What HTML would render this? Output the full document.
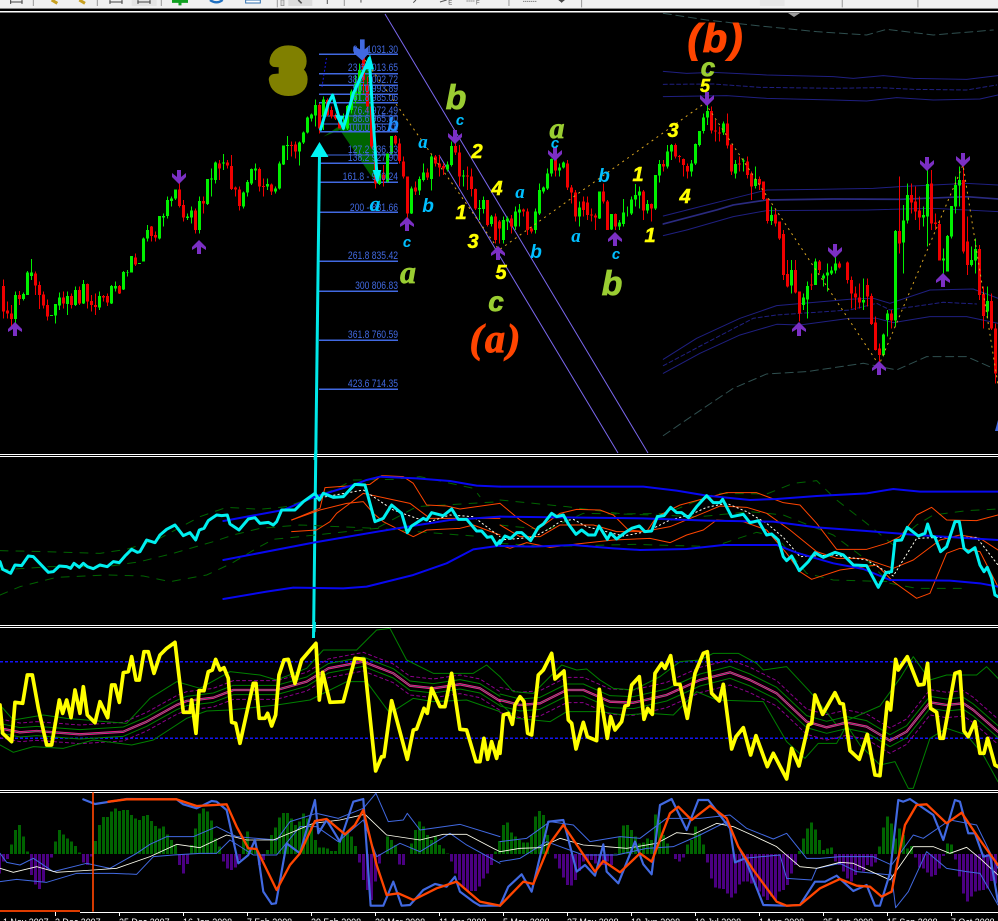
<!DOCTYPE html>
<html><head><meta charset="utf-8"><title>Chart</title>
<style>
html,body{margin:0;padding:0;background:#000;width:998px;height:921px;overflow:hidden}
svg{display:block}
polyline{fill:none;stroke-linejoin:round;stroke-linecap:round}
.lbl{font-family:"Liberation Sans",sans-serif;font-weight:bold;font-style:italic}
.ser{font-family:"Liberation Serif",serif;font-weight:bold;font-style:italic}
.fib text{font:11px "Liberation Sans",sans-serif;fill:#4169e1;text-anchor:end}
.dt{font:10.5px "Liberation Sans",sans-serif;fill:#fff}
</style></head><body>
<svg xmlns="http://www.w3.org/2000/svg" width="998" height="921" viewBox="0 0 998 921">
<defs>
<path id="ad" d="M-2 0H2V7L7 3V7L0 14L-7 7V3L-2 7Z" fill="#7b2fc4"/>
<path id="au" d="M-2 14H2V7L7 10V7L0 0L-7 7V10L-2 7Z" fill="#7b2fc4"/>
</defs>
<rect width="998" height="921" fill="#000"/>

<!-- toolbar -->
<rect width="998" height="8" fill="#f0f0f0"/>
<rect y="8" width="998" height="1" fill="#8a8a8a"/>
<rect y="11" width="998" height="1.5" fill="#fff"/>
<g transform="scale(.3333)">
<path d="M100 0V18M292 0V18M484 0V18M832 0V22M1033 0V18M1527 0V18M1745 0V22" stroke="#999" stroke-width="3"/>
<path d="M30 6H68M32 0V12M66 0V12M328 6H368M330 0V12M366 0V12" stroke="#444" stroke-width="3" fill="none"/>
<rect x="395" y="0" width="75" height="18" fill="#e4e4e4"/>
<path d="M412 6H452M414 0V12M450 0V12" stroke="#444" stroke-width="3" fill="none"/>
<path d="M155 0L172 10M238 0L255 10" stroke="#c8a020" stroke-width="9"/>
<path d="M516 4H564M540 0V16" stroke="#10a020" stroke-width="9"/>
<path d="M630 0Q650 14 668 0" stroke="#2070c0" stroke-width="7" fill="none"/>
<rect x="737" y="0" width="44" height="9" fill="#fff" stroke="#3070b0" stroke-width="3"/>
<rect x="843" y="0" width="9" height="17" fill="#ddd" stroke="#888" stroke-width="2"/>
<rect x="865" y="0" width="72" height="18" fill="#dcdcdc"/>
<path d="M895 0L905 10" stroke="#555" stroke-width="5"/>
<path d="M982 0V12M1083 0V8M1240 8L1248 0M1320 6L1340 0" stroke="#555" stroke-width="3"/>
<text x="1345" y="14" font-family="Liberation Sans,sans-serif" font-size="18" fill="#555">E</text>
<text x="1428" y="14" font-family="Liberation Sans,sans-serif" font-size="18" fill="#555">F</text>
<path d="M1400 3H1425M1570 4H1610M1685 0V8" stroke="#555" stroke-width="3" stroke-dasharray="3 3"/>
<path d="M1675 0H1695L1685 8Z" fill="#444"/>
<rect x="2280" y="0" width="74" height="18" fill="#e6e6e6"/>
<path d="M2527 0V22M2754 0V22" stroke="#999" stroke-width="3"/>
</g>
<path d="M788 13H800L794 17Z" fill="#999"/>

<!-- diagonal lines -->
<path d="M385 14L648 453M439 155L618 453" stroke="#7b68ee" stroke-width="1" fill="none"/>

<!-- channels right -->
<g transform="translate(500,0) scale(.3333)" stroke-width="3">
<polyline stroke="#1f1f80" points="490,214 560,220 640,217 800,225 1000,230 1060,235 1150,227 1240,235 1400,238 1494,227"/>
<polyline stroke="#1f1f80" stroke-dasharray="12 8" points="490,253 640,252 780,262 1000,265 1140,263 1240,268 1400,270 1490,255"/>
<polyline stroke="#1f1f80" points="490,290 680,287 800,295 1000,300 1100,303 1190,293 1300,300 1440,297 1494,285"/>
<polyline stroke="#2f4f4f" stroke-dasharray="24 14" points="490,40 620,60 780,78 950,95 1100,105 1160,88 1300,105 1480,90"/>
<polyline stroke="#1f1f80" points="490,648 620,615 700,595 800,570 950,568 1120,565 1200,560 1400,550 1494,555"/>
<polyline stroke="#2a2a80" stroke-width="5" points="490,672 650,630 700,615 800,600 1000,597 1200,598 1400,590 1494,597"/>
<polyline stroke="#1f1f80" points="560,690 700,650 800,632 1100,630 1300,625 1494,635"/>
<g transform="translate(0,690)">
<polyline stroke="#1f1f80" points="490,17 560,0"/>
<polyline stroke="#1f1f80" points="490,388 590,325 720,265 830,227 1050,208 1120,205 1170,220 1290,180 1420,177 1494,205"/>
<polyline stroke="#1f1f80" stroke-dasharray="12 8" points="490,407 620,338 760,265 830,255 1050,240 1130,220 1170,240 1330,217 1430,222"/>
<polyline stroke="#1f1f80" points="490,430 600,370 720,315 830,283 900,285 1050,265 1130,265 1180,278 1290,260 1400,260 1494,280"/>
<polyline stroke="#2f4f4f" stroke-dasharray="24 14" points="490,617 610,535 700,475 800,432 920,425 1090,400 1190,420 1280,380 1400,380 1480,415"/>
</g>
</g>

<!-- green harmonic polygon -->
<g transform="translate(260,30) scale(.3333)">
<polygon fill="#006400" points="190,320 250,280 300,120 330,100 340,300 358,462 335,440 240,300"/>
</g>

<!-- fib lines -->
<g transform="scale(.3333)" stroke="#4169e1" stroke-width="3.6" shape-rendering="crispEdges">
<path d="M957 163H1194M957 221H1194M957 256H1194M957 283H1194M957 308H1194M957 348H1194M957 372H1194M957 395H1194M957 465H1194M957 490H1194M957 547H1194M957 637H1194M957 784H1194M957 874H1194M957 1021H1194M957 1168H1194"/>
</g>
<path d="M326.5 58L322 87" stroke="#1414e0" stroke-width="1" stroke-dasharray="2 2"/>

<!-- candles -->
<g transform="scale(.3333)" shape-rendering="crispEdges" fill="none">
<path stroke="#00f000" stroke-width="3.6" d="M46.5 875V990M70.5 878V902M82.5 813V885M94.5 777V840M154.5 945V948M166.5 912V970M178.5 878V930M202.5 875V945M226.5 860V918M250.5 840V912M298.5 875V930M334.5 855V912M346.5 845V875M370.5 813V870M382.5 810V830M394.5 768V818M418.5 790V792M430.5 713V785M442.5 675V725M478.5 648V718M490.5 640V680M502.5 590V655M514.5 590V620M526.5 568V600M562.5 640V660M574.5 620V670M598.5 590V700M622.5 537V615M634.5 505V590M646.5 485V550M670.5 462V510M730.5 575V625M742.5 540V590M754.5 505V555M766.5 490V540M802.5 535V570M826.5 560V580M838.5 485V568M850.5 437V495M862.5 408V480M898.5 425V497M910.5 395V432M922.5 350V400M934.5 340V365M946.5 298V380M970.5 290V390M1030.5 340V392M1042.5 315V390M1054.5 268V340M1066.5 225V310M1078.5 190V300M1138.5 510V555M1162.5 460V548M1174.5 408V465M1234.5 560V642M1258.5 530V585M1270.5 490V545M1294.5 465V572M1342.5 485V515M1354.5 425V500M1390.5 510V560M1438.5 600V660M1450.5 590V640M1474.5 645V680M1510.5 650V730M1522.5 650V690M1546.5 620V690M1558.5 612V680M1606.5 625V700M1618.5 550V645M1630.5 560V580M1642.5 505V570M1654.5 475V530M1678.5 490V530M1690.5 485V505M1738.5 605V680M1798.5 575V657M1834.5 642V690M1858.5 660V690M1870.5 597V680M1882.5 620V650M1894.5 590V645M1906.5 552V620M1918.5 560V625M1942.5 600V640M1966.5 525V630M1978.5 480V548M2002.5 435V505M2014.5 432V480M2074.5 480V530M2086.5 430V495M2098.5 393V440M2110.5 340V400M2122.5 300V375M2170.5 365V405M2206.5 480V535M2230.5 475V515M2266.5 500V565M2314.5 620V675M2374.5 780V880M2410.5 880V930M2422.5 845V955M2446.5 775V855M2470.5 820V860M2482.5 790V875M2494.5 800V825M2506.5 770V820M2530.5 802V803M2590.5 835V930M2650.5 1000V1070M2662.5 930V1010M2686.5 690V980M2710.5 615V820M2722.5 550V670M2770.5 620V680M2782.5 490V740M2830.5 745V820M2842.5 705V815M2854.5 618V715M2866.5 530V640M2878.5 500V620M2914.5 740V800M2926.5 715V820M2962.5 860V955"/>
<path stroke="#00f000" stroke-width="9.6" d="M46.5 885V957M70.5 882V897M82.5 818V885M94.5 818V828M154.5 945V948M166.5 912V947M178.5 892V917M202.5 888V912M226.5 870V915M250.5 852V910M298.5 888V922M334.5 858V910M346.5 858V865M370.5 816V868M382.5 816V818M394.5 768V818M418.5 789V792M430.5 715V785M442.5 690V715M478.5 648V715M490.5 648V652M502.5 600V648M514.5 595V603M526.5 568V595M562.5 650V654M574.5 632V652M598.5 603V690M622.5 537V612M634.5 535V538M646.5 488V540M670.5 487V490M730.5 578V620M742.5 546V578M754.5 507V550M766.5 505V512M802.5 552V560M826.5 565V575M838.5 490V565M850.5 437V493M862.5 435V438M898.5 428V455M910.5 397V428M922.5 352V397M934.5 343V355M946.5 315V347M970.5 298V350M1030.5 372V388M1042.5 318V385M1054.5 275V330M1066.5 250V300M1078.5 210V285M1138.5 520V552M1162.5 460V545M1174.5 408V460M1234.5 565V640M1258.5 537V572M1270.5 517V540M1294.5 470V537M1342.5 493V508M1354.5 438V495M1390.5 527V530M1438.5 624V627M1450.5 600V627M1474.5 650V672M1510.5 660V720M1522.5 655V665M1546.5 635V680M1558.5 628V638M1606.5 635V690M1618.5 570V640M1630.5 562V575M1642.5 520V565M1654.5 477V520M1678.5 502V512M1690.5 487V502M1738.5 622V650M1798.5 575V655M1834.5 642V688M1858.5 668V680M1870.5 637V672M1882.5 637V638M1894.5 598V640M1906.5 585V598M1918.5 574V587M1942.5 612V632M1966.5 525V625M1978.5 492V527M2002.5 454V500M2014.5 435V455M2074.5 490V515M2086.5 432V490M2098.5 393V435M2110.5 352V393M2122.5 333V352M2170.5 370V398M2206.5 492V520M2230.5 482V485M2266.5 537V558M2314.5 645V663M2374.5 810V857M2410.5 892V915M2422.5 858V898M2446.5 785V855M2470.5 827V835M2482.5 817V827M2494.5 812V820M2506.5 790V812M2530.5 802V803M2590.5 900V908M2650.5 1003V1065M2662.5 940V960M2686.5 693V962M2710.5 662V728M2722.5 585V662M2770.5 645V652M2782.5 552V650M2830.5 775V782M2842.5 708V815M2854.5 618V710M2866.5 555V620M2878.5 540V557M2914.5 780V795M2926.5 747V782M2962.5 903V935"/>
<path stroke="#f00000" stroke-width="3.6" d="M10.5 838V955M22.5 905V955M34.5 915V980M58.5 873V915M106.5 815V885M118.5 845V927M130.5 875V925M142.5 898V962M190.5 875V925M214.5 880V925M238.5 860V915M262.5 850V925M274.5 885V935M286.5 880V945M310.5 885V905M322.5 880V918M358.5 855V882M406.5 760V798M454.5 678V725M466.5 695V725M538.5 510V622M550.5 600V665M586.5 625V700M610.5 590V640M658.5 480V540M682.5 480V505M694.5 465V570M706.5 560V590M718.5 560V632M778.5 503V575M790.5 535V590M814.5 550V585M874.5 425V470M886.5 425V475M958.5 310V400M982.5 295V350M994.5 320V355M1006.5 340V360M1018.5 350V385M1090.5 150V280M1102.5 230V338M1114.5 235V445M1126.5 440V565M1150.5 495V560M1186.5 405V435M1198.5 415V490M1210.5 470V535M1222.5 530V665M1246.5 545V585M1282.5 505V540M1306.5 465V500M1318.5 465V530M1330.5 490V525M1366.5 425V465M1378.5 435V560M1402.5 500V570M1414.5 505V590M1426.5 565V630M1462.5 600V680M1486.5 640V730M1498.5 660V730M1534.5 645V700M1570.5 625V650M1582.5 625V705M1594.5 680V700M1666.5 470V530M1702.5 480V570M1714.5 555V610M1726.5 570V665M1750.5 590V650M1762.5 590V660M1774.5 625V665M1786.5 640V690M1810.5 550V610M1822.5 600V690M1846.5 640V690M1930.5 570V660M1954.5 610V665M1990.5 480V515M2026.5 430V475M2038.5 465V488M2050.5 475V530M2062.5 490V535M2134.5 320V400M2146.5 360V425M2158.5 380V425M2182.5 340V445M2194.5 433V525M2218.5 470V515M2242.5 470V535M2254.5 515V600M2278.5 530V570M2290.5 545V600M2302.5 595V670M2326.5 630V680M2338.5 665V720M2350.5 690V840M2362.5 780V862M2386.5 780V880M2398.5 875V965M2434.5 820V870M2458.5 780V820M2518.5 785V806M2542.5 785V850M2554.5 830V925M2566.5 860V930M2578.5 850V925M2602.5 835V920M2614.5 880V975M2626.5 950V1052M2638.5 1030V1100M2674.5 930V985M2698.5 530V760M2734.5 550V640M2746.5 560V660M2758.5 590V690M2794.5 510V690M2806.5 640V690M2818.5 660V780M2890.5 500V760M2902.5 650V825M2938.5 735V900M2950.5 860V985M2974.5 880V990M2986.5 970V1150"/>
<path stroke="#f00000" stroke-width="9.6" d="M10.5 858V935M22.5 932V940M34.5 940V957M58.5 885V897M106.5 820V857M118.5 855V885M130.5 883V917M142.5 915V950M190.5 892V910M214.5 888V915M238.5 870V910M262.5 852V905M274.5 903V915M286.5 915V921M310.5 888V893M322.5 888V908M358.5 858V880M406.5 772V794M454.5 680V708M466.5 705V712M538.5 568V618M550.5 615V652M586.5 632V690M610.5 603V610M658.5 490V505M682.5 487V497M694.5 498V567M706.5 562V568M718.5 568V618M778.5 507V560M790.5 558V561M814.5 553V575M874.5 435V438M886.5 433V455M958.5 315V385M982.5 300V345M994.5 330V350M1006.5 345V355M1018.5 355V385M1090.5 165V240M1102.5 255V320M1114.5 320V440M1126.5 440V550M1150.5 525V540M1186.5 408V430M1198.5 430V483M1210.5 485V530M1222.5 530V640M1246.5 563V575M1282.5 517V532M1306.5 470V490M1318.5 490V503M1330.5 498V505M1366.5 438V458M1378.5 457V530M1402.5 527V530M1414.5 530V567M1426.5 567V625M1462.5 600V675M1486.5 650V720M1498.5 665V685M1534.5 655V680M1570.5 628V635M1582.5 635V690M1594.5 685V695M1666.5 478V512M1702.5 490V563M1714.5 563V578M1726.5 577V650M1750.5 605V630M1762.5 607V645M1774.5 644V647M1786.5 647V652M1810.5 575V605M1822.5 605V690M1846.5 642V680M1930.5 574V632M1954.5 612V625M1990.5 492V500M2026.5 435V470M2038.5 468V471M2050.5 477V495M2062.5 498V515M2134.5 333V392M2146.5 392V395M2158.5 397V400M2182.5 370V437M2194.5 433V515M2218.5 491V494M2242.5 485V525M2254.5 520V560M2278.5 537V553M2290.5 545V597M2302.5 595V663M2326.5 643V670M2338.5 665V715M2350.5 702V825M2362.5 822V860M2386.5 810V877M2398.5 875V940M2434.5 853V856M2458.5 785V810M2518.5 790V802M2542.5 787V840M2554.5 840V880M2566.5 880V893M2578.5 893V908M2602.5 855V890M2614.5 888V972M2626.5 967V1050M2638.5 1045V1065M2674.5 940V962M2698.5 693V730M2734.5 585V608M2746.5 605V635M2758.5 632V652M2794.5 550V670M2806.5 668V672M2818.5 672V782M2890.5 540V755M2902.5 725V795M2938.5 747V885M2950.5 882V948M2974.5 903V985M2986.5 985V1120"/>
</g>

<!-- zigzag dashed -->
<path d="M365 60L499 250L705 103L879 365L963 165L998 385" fill="none" stroke="#daa520" stroke-width="1" stroke-dasharray="2 4"/>

<!-- fib labels -->
<g class="fib" transform="translate(398,0) scale(.78,1)">
<text y="53">0.0 1031.30</text><text y="71">23.6 1013.65</text><text y="83">38.2 1002.72</text><text y="92">50.0 993.89</text><text y="101">61.8 985.06</text><text y="114">76.4 972.49</text><text y="122">88.6 965.00</text><text y="131">100.0 956.48</text><text y="153">127.2 936.13</text><text y="161">138.2 927.90</text><text y="180">161.8 - 910.24</text><text y="211">200 - 881.66</text><text y="259">261.8 835.42</text><text y="289">300 806.83</text><text y="338">361.8 760.59</text><text y="387">423.6 714.35</text>
</g>

<!-- cyan wave -->
<g transform="translate(260,30) scale(.3333)" fill="none" stroke="#00f5f5">
<polyline stroke-width="9" points="182,298 205,220 218,195 235,255 250,295 280,190 328,85 340,280 352,450"/>
<path stroke="none" fill="#00f5f5" d="M330 72L316 118H342ZM352 462L338 420H364Z"/>
<path stroke="none" fill="#00f5f5" d="M225 255L240 285 252 258Z"/>
<path stroke="none" fill="#4169e1" d="M300 28H314V58L326 48V70L307 92 282 70V48L300 58Z"/>
</g>
<path d="M319.5 155L313.5 638" stroke="#00e8e8" stroke-width="3" fill="none"/>
<path d="M319.5 142L310.5 157H328.5Z" fill="#00f5f5"/>

<!-- purple arrows -->
<use href="#ad" x="179" y="170"/><use href="#ad" x="455" y="130"/><use href="#ad" x="555" y="147"/><use href="#ad" x="707" y="92"/><use href="#ad" x="927" y="157"/><use href="#ad" x="963" y="153"/><use href="#ad" x="835" y="244"/>
<use href="#au" x="407" y="217"/><use href="#au" x="199" y="240"/><use href="#au" x="15" y="322"/><use href="#au" x="498" y="246"/><use href="#au" x="615" y="232"/><use href="#au" x="799" y="322"/><use href="#au" x="879" y="361"/><use href="#au" x="943" y="273"/>
<path d="M995 431L998 420V431Z" fill="#4169e1"/>

<!-- labels -->
<text x="273" y="90" font-family="Liberation Sans,sans-serif" font-weight="bold" font-size="56" fill="#808000" stroke="#808000" stroke-width="11" stroke-linejoin="round">3</text>
<g fill="#9acd32" stroke="#9acd32" stroke-width=".7" text-anchor="middle">
<text class="ser" x="408" y="283" font-size="32">a</text>
<text class="lbl" x="456" y="109" font-size="34">b</text>
<text class="lbl" x="496" y="311" font-size="28">c</text>
<text class="ser" x="557" y="138" font-size="30">a</text>
<text class="lbl" x="708" y="76" font-size="26">c</text>
<text class="lbl" x="612" y="295" font-size="34">b</text>
</g>
<g fill="#ff4500" stroke="#ff4500" stroke-width="1" text-anchor="middle" letter-spacing="2">
<text class="ser" x="496" y="352" font-size="40">(a)</text>
<text class="lbl" x="716" y="52" font-size="40">(b)</text>
</g>
<g fill="#00bfff" text-anchor="middle">
<text class="lbl" x="407" y="247" font-size="15">c</text>
<text class="lbl" x="460" y="125" font-size="15">c</text>
<text class="lbl" x="555" y="148" font-size="15">c</text>
<text class="lbl" x="616" y="259" font-size="15">c</text>
<text class="ser" x="423" y="148" font-size="19">a</text>
<text class="lbl" x="428" y="212" font-size="19">b</text>
<text class="ser" x="520" y="198" font-size="19">a</text>
<text class="lbl" x="536" y="258" font-size="19">b</text>
<text class="ser" x="576" y="242" font-size="19">a</text>
<text class="lbl" x="604" y="182" font-size="19">b</text>
<text class="ser" x="375" y="211" font-size="22">a</text>
<text class="lbl" x="393" y="131" font-size="19" fill="#2090ff">b</text>
</g>
<g fill="#ffff00" stroke="#ffff00" stroke-width=".5" text-anchor="middle" font-size="20">
<text class="lbl" x="477" y="158">2</text><text class="lbl" x="461" y="219">1</text><text class="lbl" x="473" y="248">3</text><text class="lbl" x="497" y="195">4</text><text class="lbl" x="501" y="279">5</text><text class="lbl" x="638" y="181">1</text><text class="lbl" x="650" y="242">1</text><text class="lbl" x="673" y="137">3</text><text class="lbl" x="685" y="203">4</text><text class="lbl" x="705" y="92" font-size="18">5</text>
</g>

<!-- panel separators -->
<g fill="#fff">
<rect y="454" width="998" height="1"/><rect y="456" width="998" height="1"/>
<rect y="625" width="998" height="1"/><rect y="627" width="998" height="1"/>
<rect y="790" width="998" height="1"/><rect y="792" width="998" height="1"/>
</g>
<path d="M316 450L315 460M314.5 622L314 632" stroke="#00e8e8" stroke-width="3"/>

<!-- panel 2 left -->
<g transform="translate(0,450) scale(.3333)">
<g stroke="#006400" stroke-width="3" stroke-dasharray="24 24">
<polyline points="0,302 140,305 300,310 380,298 470,270 600,200 680,172 780,178 860,170 1000,120 1060,90 1180,88 1260,80 1420,115 1440,140"/>
<polyline points="0,360 150,350 320,350 420,335 520,310 640,275 700,255 780,235 900,225 1130,235 1250,170 1500,155"/>
<polyline points="0,435 60,410 170,382 320,375 430,378 510,395 620,375 695,340 770,295 820,268 900,260 1130,235 1250,245 1420,258"/>
</g>
<g stroke="#ff4500" stroke-width="3">
<polyline points="875,210 960,175 975,113 1110,103 1145,77 1210,80 1240,100 1280,165 1340,168 1380,177 1500,160"/>
<polyline points="875,245 950,240 990,215 1010,190 1090,130 1160,145 1230,160 1290,205 1500,205"/>
<polyline points="875,210 960,180 1040,160 1090,155 1120,190 1150,215 1240,260 1280,240 1380,235 1420,225 1500,255"/>
</g>
<polyline stroke="#fffff0" stroke-width="3" stroke-dasharray="4 9" points="950,145 1090,120 1180,180 1250,205 1290,215 1350,195 1420,200 1500,260"/>
<g stroke="#0808f0" stroke-width="6">
<polyline points="670,213 850,180 945,140 1060,105 1100,90 1140,80 1250,85 1350,93 1430,107 1500,110"/>
<polyline points="670,330 940,278 1180,237 1350,210 1500,200"/>
<polyline points="670,447 800,425 880,413 1030,415 1100,410 1240,375 1340,340 1420,298 1500,287"/>
</g>
<polyline stroke="#00f0f0" stroke-width="9" points="0,335 8,358 32,370 45,345 65,347 85,318 100,320 145,367 160,365 178,348 200,350 212,355 222,340 238,352 250,340 262,350 280,356 300,345 322,350 340,335 358,338 375,318 395,298 412,307 420,305 440,270 465,278 480,255 500,238 525,225 550,257 570,248 587,270 598,240 612,235 625,212 650,195 665,197 682,195 690,222 717,240 745,207 765,203 780,220 805,217 820,225 830,215 845,180 885,180 910,155 945,130 958,150 970,130 1000,142 1030,140 1065,103 1095,105 1125,215 1150,205 1175,165 1205,190 1222,248 1235,228 1270,205 1280,210 1295,188 1330,197 1355,177 1375,208 1400,208 1430,243 1445,243 1462,262 1475,260 1490,285 1500,272"/>
</g>
<!-- panel 2 right -->
<g transform="translate(500,450) scale(.3333)">
<g stroke="#006400" stroke-width="3" stroke-dasharray="24 24">
<polyline points="0,150 200,170 370,192 500,190 560,165 650,130 800,132 880,100 950,92 1010,150 1100,220 1180,285 1250,225 1300,195 1400,182 1494,177"/>
<polyline points="0,225 140,240 250,190 400,193 600,200 750,185 850,195 1000,255 1100,330 1170,400 1250,415 1400,415"/>
<polyline points="0,280 150,290 400,283 640,290 700,270 770,247 830,260 920,370 1000,390 1070,392 1170,395"/>
</g>
<g stroke="#ff4500" stroke-width="3">
<polyline points="0,160 60,210 110,240 180,190 230,178 300,180 340,195 385,240 440,245 470,200 540,165 680,128 770,128 850,158 900,165 950,220 1010,298 1100,298 1160,280 1200,260 1250,195 1295,172 1340,210 1430,212 1494,195"/>
<polyline points="0,225 60,260 120,260 180,225 280,225 350,245 430,245 510,230 620,185 660,168 740,172 800,190 870,240 950,305 1010,325 1090,325 1180,355 1240,330 1320,270 1380,255 1440,265 1494,300"/>
<polyline points="0,285 30,295 80,278 150,292 230,282 340,270 450,265 510,278 560,255 610,240 650,210 730,215 800,240 860,310 900,365 935,388 1020,360 1130,345 1180,395 1250,445 1290,430 1340,310 1380,295 1440,305 1494,410"/>
</g>
<polyline stroke="#fffff0" stroke-width="3" stroke-dasharray="4 9" points="0,270 100,262 150,235 180,215 220,208 260,230 300,240 370,258 440,245 510,210 570,195 620,172 680,160 740,185 800,220 850,262 900,320 1000,315 1100,330 1180,378 1250,265 1330,262 1430,262 1494,345"/>
<g stroke="#0808f0" stroke-width="6">
<polyline points="0,110 430,110 530,122 620,137 750,150 830,147 950,138 1100,130 1180,117 1260,125 1494,125"/>
<polyline points="0,200 430,205 620,212 820,215 950,232 1100,243 1250,255 1494,270"/>
<polyline points="0,288 100,290 220,285 340,295 420,300 560,297 670,285 830,285 890,308 1000,340 1090,357 1170,390 1350,392 1440,400 1494,410"/>
</g>
<polyline stroke="#00f0f0" stroke-width="9" points="0,280 15,258 32,265 50,248 65,248 92,272 115,232 130,222 155,190 170,200 190,195 205,222 228,253 245,240 265,255 285,255 297,228 322,268 332,250 350,267 375,248 395,235 418,228 435,245 455,243 472,200 492,197 512,172 530,188 545,188 565,203 590,170 620,137 640,158 660,158 668,148 695,200 730,193 750,218 775,212 800,255 815,252 835,270 850,320 860,332 875,318 898,362 925,335 945,308 970,322 1005,307 1030,315 1060,345 1100,347 1135,412 1158,368 1175,365 1185,272 1205,270 1222,232 1255,258 1275,250 1283,222 1295,258 1305,262 1322,305 1340,290 1365,215 1378,215 1392,295 1405,307 1425,293 1440,345 1452,365 1462,352 1475,385 1485,435 1494,440"/>
</g>

<!-- panel 3 left -->
<g transform="translate(0,625) scale(.3333)">
<defs><polyline id="c8" points="0,310 60,322 110,318 240,328 370,320 440,290 530,240 560,228 640,218 700,195 830,195 920,170 985,130 1090,110 1180,145 1230,182 1300,190 1380,178 1440,190 1500,228"/></defs>
<path d="M0 110H1500M0 340H1500" stroke="#1414f8" stroke-width="3.6" stroke-dasharray="9 6" shape-rendering="crispEdges"/>
<g fill="none">
<use href="#c8" stroke="#8b008b" stroke-width="3" stroke-dasharray="9 9" transform="translate(0,-28)"/>
<use href="#c8" stroke="#8b008b" stroke-width="3" stroke-dasharray="9 9" transform="translate(0,28)"/>
<use href="#c8" stroke="#008000" stroke-width="3" transform="translate(0,-14)"/>
<use href="#c8" stroke="#008000" stroke-width="3" transform="translate(0,14)"/>
</g>
<polyline stroke="#008000" stroke-width="3" points="0,240 40,285 130,270 200,280 380,295 450,220 530,170 600,190 690,140 780,150 830,165 920,130 970,75 1070,75 1130,15 1170,10 1220,105 1300,145 1420,145 1460,120 1500,155"/>
<polyline stroke="#008000" stroke-width="3" points="0,360 40,382 100,365 190,370 280,345 395,360 460,345 560,280 620,258 690,255 830,240 930,225 1040,170 1100,170 1170,265 1240,220 1300,230 1400,225 1500,260"/>
<use href="#c8" fill="none" stroke="#ff1493" stroke-width="7"/>
<use href="#c8" fill="none" stroke="#008040" stroke-width="2"/>
<polyline stroke="#ffff00" stroke-width="11" points="0,240 8,325 35,350 45,232 68,235 82,150 97,150 115,250 140,360 155,360 178,225 188,265 200,225 213,278 225,195 240,265 250,185 262,270 285,293 300,230 323,278 335,180 345,180 358,232 370,143 385,140 395,95 408,165 418,165 432,80 445,80 462,145 480,90 500,70 525,52 550,262 570,262 575,225 588,325 597,197 612,197 625,140 637,135 647,103 660,135 672,128 685,160 695,292 707,295 720,355 760,175 768,175 778,280 795,280 803,265 815,303 827,270 837,150 852,105 865,103 885,175 905,105 948,55 958,225 968,142 990,232 1030,230 1065,100 1092,103 1127,438 1145,395 1152,395 1175,227 1222,403 1240,315 1250,312 1272,250 1282,265 1295,190 1320,245 1335,245 1355,145 1380,313 1400,315 1428,410 1440,410 1452,340 1463,403 1475,350 1490,400 1500,350"/>
</g>
<!-- panel 3 right -->
<g transform="translate(500,625) scale(.3333)">
<defs><polyline id="c9" points="0,225 60,240 120,235 200,195 250,195 330,230 400,233 500,210 600,165 690,142 750,165 830,205 920,290 980,307 1040,293 1100,305 1170,347 1220,320 1290,232 1340,240 1390,235 1420,255 1494,320"/></defs>
<path d="M0 110H1494M0 340H1494" stroke="#1414f8" stroke-width="3.6" stroke-dasharray="9 6" shape-rendering="crispEdges"/>
<g fill="none">
<use href="#c9" stroke="#8b008b" stroke-width="3" stroke-dasharray="9 9" transform="translate(0,-38)"/>
<use href="#c9" stroke="#8b008b" stroke-width="3" stroke-dasharray="9 9" transform="translate(0,38)"/>
<use href="#c9" stroke="#008000" stroke-width="3" transform="translate(0,-18)"/>
<use href="#c9" stroke="#008000" stroke-width="3" transform="translate(0,18)"/>
</g>
<polyline stroke="#008000" stroke-width="3" points="0,155 40,200 100,205 185,120 230,135 260,132 300,165 340,190 400,195 480,155 540,110 600,105 640,85 715,85 770,115 790,135 860,125 930,200 1010,300 1140,243 1200,160 1240,95 1290,165 1340,150 1430,150 1460,125 1494,160"/>
<polyline stroke="#008000" stroke-width="3" points="0,235 50,280 150,290 200,260 300,260 370,270 450,265 520,270 590,200 650,225 790,230 860,350 915,400 955,355 1010,355 1040,300 1080,360 1140,420 1185,410 1225,490 1240,490 1290,340 1340,310 1400,330 1450,390 1494,470"/>
<use href="#c9" fill="none" stroke="#ff1493" stroke-width="7"/>
<use href="#c9" fill="none" stroke="#008040" stroke-width="2"/>
<polyline stroke="#ffff00" stroke-width="11" points="0,385 10,270 25,265 37,298 45,240 60,215 72,230 83,325 95,330 115,150 130,135 155,85 165,162 192,138 205,285 215,295 228,372 250,292 262,335 290,347 298,193 322,340 332,275 345,315 365,290 375,243 385,240 395,180 418,155 432,283 443,250 457,268 465,145 485,115 495,130 512,92 525,178 540,178 562,280 585,145 610,85 622,80 635,205 658,228 670,178 695,372 708,335 730,308 752,390 768,332 802,425 820,385 860,462 875,370 897,423 925,300 935,295 945,210 968,268 1005,203 1020,235 1030,237 1050,377 1078,403 1102,328 1125,450 1140,452 1162,232 1172,255 1187,103 1195,135 1222,95 1255,180 1272,178 1283,115 1292,250 1310,262 1320,340 1330,340 1365,145 1380,140 1392,318 1405,335 1425,290 1440,385 1452,385 1463,340 1485,420 1494,425"/>
</g>

<!-- panel 4 left -->
<g transform="translate(0,785) scale(.3333)">
<g shape-rendering="crispEdges" stroke-width="9.6" fill="none">
<path stroke="#006400" d="M34.5 207V178M46.5 207V135M58.5 207V120M70.5 207V155M82.5 207V200M166.5 207V170M178.5 207V135M190.5 207V148M202.5 207V160M214.5 207V170M226.5 207V183M238.5 207V203M286.5 207V168M298.5 207V120M310.5 207V96M322.5 207V96M334.5 207V80M346.5 207V70M358.5 207V78M370.5 207V75M382.5 207V75M394.5 207V90M406.5 207V100M418.5 207V105M430.5 207V93M442.5 207V90M454.5 207V108M466.5 207V123M478.5 207V130M490.5 207V125M502.5 207V148M514.5 207V165M526.5 207V180M574.5 207V180M586.5 207V130M598.5 207V85M610.5 207V70M622.5 207V80M634.5 207V107M646.5 207V160M658.5 207V185M730.5 207V165M742.5 207V140M754.5 207V195M766.5 207V190M802.5 207V195M814.5 207V150M826.5 207V128M838.5 207V97M850.5 207V84M862.5 207V84M874.5 207V100M886.5 207V120M898.5 207V110M910.5 207V85M922.5 207V100M934.5 207V120M946.5 207V165M958.5 207V187M970.5 207V187M982.5 207V190M994.5 207V198M1006.5 207V198M1018.5 207V160M1030.5 207V150M1042.5 207V140M1054.5 207V155M1066.5 207V183M1162.5 207V155M1174.5 207V165M1186.5 207V180M1234.5 207V175M1246.5 207V135M1258.5 207V110M1270.5 207V125M1282.5 207V150M1294.5 207V165M1306.5 207V155M1318.5 207V180M1330.5 207V190M1342.5 207V205M1486.5 207V200M1498.5 207V168"/>
<path stroke="#4b0082" d="M-1.5 207V265M10.5 207V230M22.5 207V222M94.5 207V270M106.5 207V298M118.5 207V312M130.5 207V290M142.5 207V255M154.5 207V217M250.5 207V232M262.5 207V240M274.5 207V215M538.5 207V240M550.5 207V265M562.5 207V237M670.5 207V230M682.5 207V250M694.5 207V255M706.5 207V248M718.5 207V225M778.5 207V240M790.5 207V225M1078.5 207V233M1090.5 207V285M1102.5 207V315M1114.5 207V345M1126.5 207V290M1138.5 207V235M1198.5 207V238M1210.5 207V240M1354.5 207V230M1366.5 207V265M1378.5 207V285M1390.5 207V305M1402.5 207V318M1414.5 207V318M1426.5 207V318M1438.5 207V305M1450.5 207V280M1462.5 207V265M1474.5 207V240"/>
</g>
<g stroke="#4169e1" stroke-width="3">
<polyline points="0,205 20,232 60,240 100,220 160,260 260,235 330,250 410,205 450,178 500,155 580,155 650,125 710,155 830,165 870,110 950,85 1015,100 1090,70 1128,25 1165,110 1210,105 1222,85 1260,135 1380,118 1500,155"/>
<polyline points="0,290 50,283 140,292 230,265 340,265 410,268 460,215 520,210 600,205 650,205 690,165 760,210 830,210 900,125 950,125 1015,170 1090,105 1130,215 1200,175 1260,200 1350,145 1400,180 1500,235"/>
</g>
<polyline stroke="#fffff0" stroke-width="2.5" points="0,250 40,262 110,245 170,262 280,255 350,250 450,215 530,178 600,188 680,150 740,165 820,165 940,115 1020,105 1095,88 1160,150 1260,165 1330,148 1400,148 1480,190 1500,200"/>
<polyline stroke="#4169e1" stroke-width="6.5" points="250,43 285,57 330,50 380,42 530,43 550,58 590,70 635,48 650,50 680,75 715,235 745,210 765,165 775,215 790,320 815,357 828,355 860,175 900,205 945,45 955,145 980,105 1020,170 1060,50 1090,42 1112,362 1150,362 1180,290 1205,362 1230,360 1270,315 1305,297 1340,305 1365,275 1380,320 1420,350 1440,362 1500,362"/>
<polyline stroke="#ff4500" stroke-width="7" points="325,50 380,43 530,43 590,63 680,58 710,125 745,190 770,192 830,315 870,240 900,205 945,108 980,102 1035,148 1065,120 1090,75 1130,240 1160,330 1195,325 1240,345 1310,310 1370,290 1440,350 1500,362"/>
<path d="M279 22V380" stroke="#ff4500" stroke-width="5"/>
<path d="M0 378H240" stroke="#ff4500" stroke-width="5"/>
</g>
<!-- panel 4 right -->
<g transform="translate(500,785) scale(.3333)">
<g shape-rendering="crispEdges" stroke-width="9.6" fill="none">
<path stroke="#006400" d="M10.5 207V120M22.5 207V113M34.5 207V142M46.5 207V155M58.5 207V165M70.5 207V172M82.5 207V172M94.5 207V150M106.5 207V95M118.5 207V78M130.5 207V90M142.5 207V150M346.5 207V205M358.5 207V155M370.5 207V122M382.5 207V120M394.5 207V135M406.5 207V155M418.5 207V175M430.5 207V172M442.5 207V160M454.5 207V165M466.5 207V88M478.5 207V105M490.5 207V150M502.5 207V175M562.5 207V178M574.5 207V165M586.5 207V125M598.5 207V145M610.5 207V178M898.5 207V198M910.5 207V160M922.5 207V130M934.5 207V113M946.5 207V133M958.5 207V165M970.5 207V195M982.5 207V190M994.5 207V187M1138.5 207V185M1150.5 207V128M1162.5 207V95M1174.5 207V115M1186.5 207V160M1198.5 207V130M1210.5 207V150M1222.5 207V190M1234.5 207V183M1342.5 207V175M1354.5 207V178"/>
<path stroke="#4b0082" d="M166.5 207V220M178.5 207V250M190.5 207V278M202.5 207V300M214.5 207V302M226.5 207V285M238.5 207V258M250.5 207V230M262.5 207V225M274.5 207V225M286.5 207V235M298.5 207V240M310.5 207V240M322.5 207V230M334.5 207V240M526.5 207V222M538.5 207V230M550.5 207V217M622.5 207V233M634.5 207V280M646.5 207V308M658.5 207V310M670.5 207V312M682.5 207V325M694.5 207V338M706.5 207V325M718.5 207V298M730.5 207V290M742.5 207V290M754.5 207V295M766.5 207V300M778.5 207V320M790.5 207V335M802.5 207V345M814.5 207V335M826.5 207V345M838.5 207V320M850.5 207V315M862.5 207V300M874.5 207V265M886.5 207V240M1006.5 207V230M1018.5 207V240M1030.5 207V260M1042.5 207V280M1054.5 207V290M1066.5 207V270M1078.5 207V255M1090.5 207V260M1102.5 207V240M1114.5 207V245M1126.5 207V232M1246.5 207V218M1258.5 207V248M1270.5 207V250M1282.5 207V262M1294.5 207V275M1306.5 207V270M1318.5 207V250M1330.5 207V213M1366.5 207V223M1378.5 207V275M1390.5 207V325M1402.5 207V350M1414.5 207V335M1426.5 207V320M1438.5 207V317M1450.5 207V315M1462.5 207V310M1474.5 207V288M1486.5 207V295"/>
</g>
<g stroke="#4169e1" stroke-width="3">
<polyline points="0,170 80,160 150,110 220,120 270,170 360,155 420,160 500,100 600,100 690,90 740,130 820,162 860,145 920,220 960,220 1020,215 1120,215 1175,240 1240,150 1270,160 1350,105 1430,120 1494,250"/>
<polyline points="0,230 60,220 140,170 250,210 350,210 440,190 520,185 600,150 680,110 730,220 840,210 860,280 935,285 950,250 1020,235 1070,260 1175,270 1187,368 1225,320 1280,200 1340,250 1400,260 1440,265 1494,360"/>
</g>
<polyline stroke="#fffff0" stroke-width="2.5" points="0,200 60,190 120,188 180,160 250,180 320,185 380,190 470,175 530,143 580,148 650,115 700,125 760,152 830,185 900,245 950,250 1020,232 1060,235 1170,285 1240,185 1300,185 1350,205 1400,187 1440,220 1494,270"/>
<polyline stroke="#4169e1" stroke-width="6.5" points="0,362 25,305 65,268 95,320 145,110 190,105 230,260 255,240 285,272 310,178 320,260 355,295 405,170 430,238 455,268 480,60 515,42 560,135 595,45 625,45 690,130 705,232 735,220 790,360 860,362 900,360 945,290 975,290 1010,272 1060,318 1100,300 1125,362 1140,362 1170,265 1195,45 1210,50 1230,42 1300,90 1330,165 1365,45 1380,50 1405,145 1425,145 1450,215 1470,210 1494,350"/>
<polyline stroke="#ff4500" stroke-width="7" points="0,362 70,290 100,297 150,175 190,120 285,260 310,228 360,262 420,205 455,230 510,85 535,65 575,105 630,62 680,100 715,185 760,255 830,350 860,362 900,360 960,310 1020,282 1070,302 1110,305 1145,335 1175,320 1215,120 1250,60 1280,58 1340,115 1385,83 1440,165 1494,240"/>
</g>

<!-- time axis -->
<rect x="80" y="912" width="918" height="1" fill="#fff"/>
<path d="M55.5 912V916M119.5 912V916M183.5 912V916M247.5 912V916M311.5 912V916M375.5 912V916M439.5 912V916M503.5 912V916M567.5 912V916M631.5 912V916M695.5 912V916M759.5 912V916M823.5 912V916M887.5 912V916M951.5 912V916" stroke="#fff" stroke-width="1"/>
<text class="dt" transform="translate(3,925.5) scale(.85,1)">1 Nov 2007</text>
<text class="dt" transform="translate(55,925.5) scale(.85,1)">3 Dec 2007</text>
<text class="dt" transform="translate(119,925.5) scale(.85,1)">25 Dec 2007</text>
<text class="dt" transform="translate(183,925.5) scale(.85,1)">16 Jan 2008</text>
<text class="dt" transform="translate(247,925.5) scale(.85,1)">7 Feb 2008</text>
<text class="dt" transform="translate(311,925.5) scale(.85,1)">29 Feb 2008</text>
<text class="dt" transform="translate(375,925.5) scale(.85,1)">20 Mar 2008</text>
<text class="dt" transform="translate(439,925.5) scale(.85,1)">11 Apr 2008</text>
<text class="dt" transform="translate(503,925.5) scale(.85,1)">5 May 2008</text>
<text class="dt" transform="translate(567,925.5) scale(.85,1)">27 May 2008</text>
<text class="dt" transform="translate(631,925.5) scale(.85,1)">18 Jun 2008</text>
<text class="dt" transform="translate(695,925.5) scale(.85,1)">10 Jul 2008</text>
<text class="dt" transform="translate(759,925.5) scale(.85,1)">1 Aug 2008</text>
<text class="dt" transform="translate(823,925.5) scale(.85,1)">25 Aug 2008</text>
<text class="dt" transform="translate(887,925.5) scale(.85,1)">15 Sep 2008</text>
<text class="dt" transform="translate(951,925.5) scale(.85,1)">7 Oct 2008</text>
</svg>
</body></html>
